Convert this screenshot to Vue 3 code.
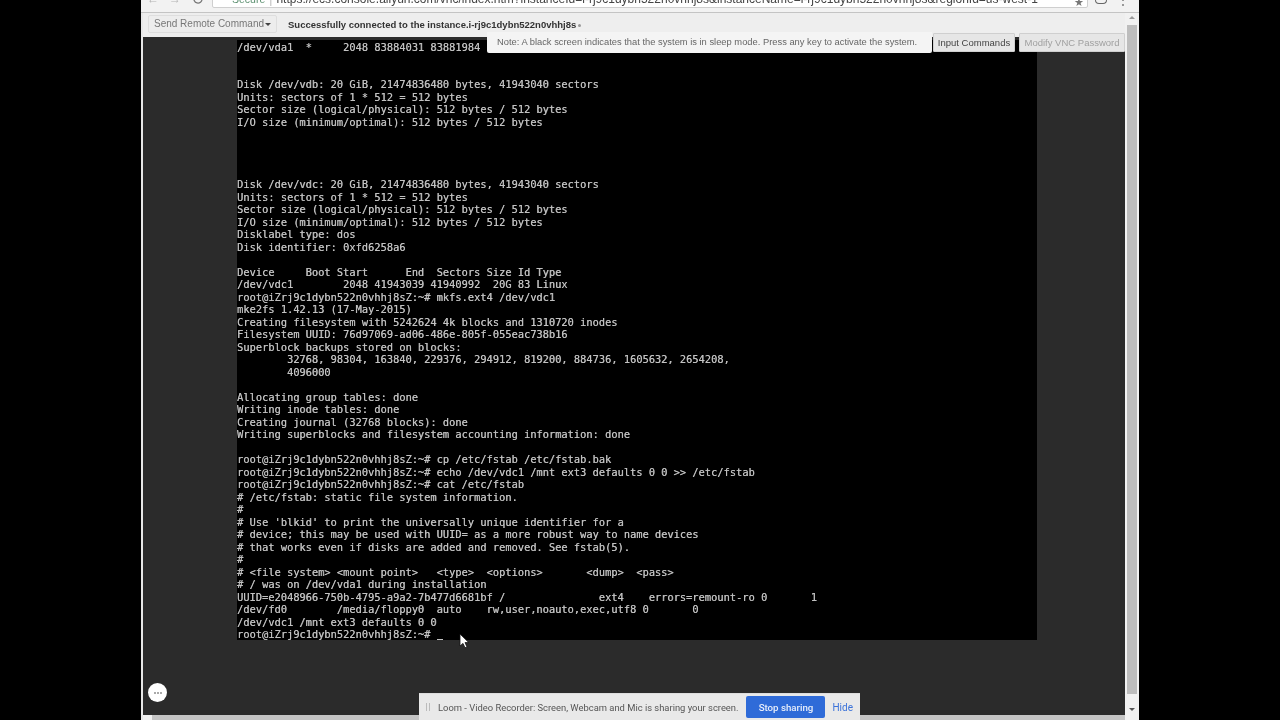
<script setup>
const prompt = 'root@iZrj9c1dybn522n0vhhj8sZ:~#'
const lines = [
  '/dev/vda1  *     2048 83884031 83881984  40G 83 Linux',
  '',
  '',
  'Disk /dev/vdb: 20 GiB, 21474836480 bytes, 41943040 sectors',
  'Units: sectors of 1 * 512 = 512 bytes',
  'Sector size (logical/physical): 512 bytes / 512 bytes',
  'I/O size (minimum/optimal): 512 bytes / 512 bytes',
  '',
  '',
  '',
  '',
  'Disk /dev/vdc: 20 GiB, 21474836480 bytes, 41943040 sectors',
  'Units: sectors of 1 * 512 = 512 bytes',
  'Sector size (logical/physical): 512 bytes / 512 bytes',
  'I/O size (minimum/optimal): 512 bytes / 512 bytes',
  'Disklabel type: dos',
  'Disk identifier: 0xfd6258a6',
  '',
  'Device     Boot Start      End  Sectors Size Id Type',
  '/dev/vdc1        2048 41943039 41940992  20G 83 Linux',
  prompt + ' mkfs.ext4 /dev/vdc1',
  'mke2fs 1.42.13 (17-May-2015)',
  'Creating filesystem with 5242624 4k blocks and 1310720 inodes',
  'Filesystem UUID: 76d97069-ad06-486e-805f-055eac738b16',
  'Superblock backups stored on blocks:',
  '        32768, 98304, 163840, 229376, 294912, 819200, 884736, 1605632, 2654208,',
  '        4096000',
  '',
  'Allocating group tables: done',
  'Writing inode tables: done',
  'Creating journal (32768 blocks): done',
  'Writing superblocks and filesystem accounting information: done',
  '',
  prompt + ' cp /etc/fstab /etc/fstab.bak',
  prompt + ' echo /dev/vdc1 /mnt ext3 defaults 0 0 >> /etc/fstab',
  prompt + ' cat /etc/fstab',
  '# /etc/fstab: static file system information.',
  '#',
  "# Use 'blkid' to print the universally unique identifier for a",
  '# device; this may be used with UUID= as a more robust way to name devices',
  '# that works even if disks are added and removed. See fstab(5).',
  '#',
  '# <file system> <mount point>   <type>  <options>       <dump>  <pass>',
  '# / was on /dev/vda1 during installation',
  'UUID=e2048966-750b-4795-a9a2-7b477d6681bf /               ext4    errors=remount-ro 0       1',
  '/dev/fd0        /media/floppy0  auto    rw,user,noauto,exec,utf8 0       0',
  '/dev/vdc1 /mnt ext3 defaults 0 0',
  prompt,
]
</script>

<template>
  <div class="screen">
    <div class="browser">
      <header class="chrome">
        <div class="nav">
          <span class="nav-glyph">←</span>
          <span class="nav-glyph">→</span>
          <svg class="reload" viewBox="0 0 12 12" width="12" height="12"><path d="M10 6a4 4 0 1 1-1.2-2.8M10 1v2.6H7.4" fill="none" stroke="#777" stroke-width="1.3"/></svg>
        </div>
        <div class="address">
          <span class="secure">Secure</span><span class="sep">|</span><span class="url">https://ecs.console.aliyun.com/vnc/index.htm?instanceId=i-rj9c1dybn522n0vhhj8s&amp;instanceName=i-rj9c1dybn522n0vhhj8s&amp;regionId=us-west-1</span>
        </div>
        <span class="star">★</span>
        <span class="avatar"></span>
        <span class="menu">⋮</span>
      </header>

      <div class="body">
        <main class="page">
          <div class="toolbar">
            <button class="send">Send Remote Command<i class="caret"></i></button>
            <strong class="status">Successfully connected to the instance.i-rj9c1dybn522n0vhhj8s</strong>
            <i class="dot"></i>
          </div>
          <div class="stage">
            <div class="terminal"><div v-for="(line, i) in lines" :key="i" class="line">{{ line }}<i v-if="i === lines.length - 1" class="cursor"></i></div></div>
            <div class="overlay">
              <div class="note">Note: A black screen indicates that the system is in sleep mode. Press any key to activate the system.</div>
              <button class="tool">Input Commands</button>
              <button class="tool muted">Modify VNC Password</button>
            </div>
            <svg class="pointer" viewBox="0 0 10 16" width="10" height="16"><path d="M1 1v12l3-2.6 2 4.4 2-.9-2-4.3h3.8z" fill="#fff" stroke="#111" stroke-width=".8"/></svg>
            <div class="bubble"><i></i><i></i><i></i></div>
          </div>
          <div class="hbar"><span class="hthumb"></span></div>
        </main>
        <aside class="scrollbar">
          <span class="arrow up"></span>
          <span class="thumb"></span>
          <span class="arrow down"></span>
        </aside>
      </div>

      <div class="loom">
        <span class="grip"></span>
        <span class="loom-text">Loom - Video Recorder: Screen, Webcam and Mic is sharing your screen.</span>
        <button class="stop">Stop sharing</button>
        <span class="hide">Hide</span>
      </div>
    </div>
  </div>
</template>

<style>
html, body { margin: 0; background: #000; overflow: hidden; }
</style>

<style scoped>
.screen {
  width: 1280px;
  height: 720px;
  background: #000;
  display: flex;
  justify-content: center;
  overflow: hidden;
  font-family: "Liberation Sans", Arial, sans-serif;
}
.browser {
  position: relative;
  width: 998px;
  height: 720px;
  display: flex;
  flex-direction: column;
  background: #f1f1f1;
  filter: blur(0.45px);
}
.chrome {
  height: 13px;
  flex: none;
  display: flex;
  align-items: flex-end;
  background: #f2f2f2;
  border-bottom: 1px solid #c4c4c4;
  box-sizing: border-box;
  overflow: hidden;
  position: relative;
}
.nav {
  width: 71px;
  flex: none;
  height: 20px;
  margin-bottom: 3px;
  display: flex;
  align-items: center;
  gap: 11px;
  padding-left: 6px;
  box-sizing: border-box;
  color: #b5b5b5;
  font-size: 12px;
}
.nav-glyph { width: 11px; }
.reload { margin-left: 1px; }
.address {
  flex: none;
  width: 876px;
  height: 20px;
  margin-bottom: 4px;
  background: #fff;
  border: 1px solid #cfcfcf;
  box-sizing: border-box;
  border-radius: 2px;
  font-size: 12px;
  line-height: 20px;
  white-space: nowrap;
  overflow: hidden;
  padding-left: 19px;
  color: #444;
}
.secure { color: #5b8f6f; font-size: 10.5px; }
.sep { margin: 0 4px; color: #bbb; }
.star { position: absolute; right: 55px; top: -3px; color: #777; font-size: 11px; line-height: 10px; }
.avatar { position: absolute; right: 32px; top: 0; width: 10px; height: 3px; border: 1px solid #666; border-top: 0; border-radius: 0 0 6px 6px; }
.menu { position: absolute; right: 10px; top: -3px; color: #666; font-size: 12px; line-height: 6px; }
.body { flex: 1; display: flex; min-height: 0; border-left: 2px solid #e8e8e8; }
.page { flex: 1; display: flex; flex-direction: column; min-width: 0; }
.toolbar {
  height: 24px;
  flex: none;
  background: #eee;
  display: flex;
  align-items: center;
  padding: 0 0 2px 5px;
  box-sizing: border-box;
}
.send {
  width: 129px;
  height: 18px;
  padding: 0;
  background: #ededed;
  border: 1px solid #dedede;
  border-radius: 2px;
  color: #777;
  font: 10px/16px "Liberation Sans", Arial, sans-serif;
  white-space: nowrap;
}
.caret {
  display: inline-block;
  margin-left: 1px;
  vertical-align: 1px;
  border: 3px solid transparent;
  border-top-color: #444;
  border-bottom-width: 0;
}
.status {
  margin-left: 11px;
  font-size: 9.5px;
  color: #333;
}
.dot { margin-left: 2px; width: 3px; height: 3px; background: #999; border-radius: 50%; margin-top: 2px; }
.stage {
  flex: 1;
  min-height: 0;
  position: relative;
  background: #2b2b2b;
}
.terminal {
  width: 800px;
  height: 600px;
  margin: 3px 0 0 94px;
  padding-top: 0.6px;
  box-sizing: border-box;
  background: #000;
  color: #c2c2c2;
  font-family: "DejaVu Sans Mono", "Liberation Mono", monospace;
  font-size: 10.36px;
  text-shadow: 0.3px 0 0 #9a9a9a;
  filter: blur(0.2px);
  overflow: hidden;
}
.line { height: 12.5px; line-height: 12.5px; white-space: pre; }
.cursor {
  display: inline-block;
  width: 6px;
  height: 1.5px;
  margin-left: 6.24px;
  vertical-align: -2.5px;
  background: #c2c2c2;
}
.overlay {
  position: absolute;
  top: -5px;
  left: 344px;
  display: flex;
  align-items: center;
}
.note {
  width: 445px;
  height: 21px;
  box-sizing: border-box;
  padding-left: 10px;
  background: #f4f4f4;
  border-radius: 0 0 2px 2px;
  font-size: 9.35px;
  line-height: 20px;
  color: #666;
  white-space: nowrap;
}
.tool {
  width: 82px;
  height: 19px;
  margin-left: 1px;
  padding: 0;
  background: #e6e6e6;
  border: 1px solid #cfcfcf;
  border-radius: 1px;
  font: 9.5px/16px "Liberation Sans", Arial, sans-serif;
  color: #444;
  white-space: nowrap;
}
.tool.muted { margin-left: 4px; color: #a0a0a0; width: 106px; }
.pointer { position: absolute; left: 316px; top: 596px; }
.bubble {
  position: absolute;
  left: 5px;
  top: 646px;
  width: 19px;
  height: 19px;
  border-radius: 50%;
  background: #fff;
  display: flex;
  align-items: center;
  justify-content: center;
  gap: 1px;
}
.bubble i { width: 2px; height: 2px; background: #aaa; }
.hbar {
  height: 5px;
  flex: none;
  background: #f1f1f1;
  padding-left: 9px;
}
.hthumb { display: block; height: 5px; background: #c4c4c4; }
.scrollbar {
  width: 14px;
  flex: none;
  display: flex;
  flex-direction: column;
  background: #f1f1f1;
}
.arrow { height: 12px; flex: none; position: relative; }
.arrow::after {
  content: "";
  position: absolute;
  left: 4px;
  border: 3px solid transparent;
}
.arrow.up::after { top: 3px; border-bottom-color: #999; border-top-width: 0; }
.arrow.down { margin-top: auto; margin-bottom: 3px; height: 14px; }
.arrow.down::after { top: 5px; border-top-color: #555; border-bottom-width: 0; }
.thumb { height: 669px; flex: none; background: #bdbdbd; margin: 0 2px; }
.loom {
  position: absolute;
  left: 278px;
  top: 693px;
  width: 441px;
  height: 27px;
  display: flex;
  align-items: center;
  background: #e9e9e9;
  box-sizing: border-box;
  border-top: 1px solid #ddd;
  font-family: Roboto, "Liberation Sans", sans-serif;
  font-size: 9.4px;
  color: #555;
}
.grip { width: 4px; height: 8px; margin-left: 7px; border-left: 1px solid #bbb; border-right: 1px solid #bbb; flex: none; box-sizing: border-box; }
.loom-text { margin-left: 8px; white-space: nowrap; }
.stop {
  flex: none;
  margin-left: auto;
  width: 79px;
  height: 22px;
  padding: 0;
  border: 0;
  border-radius: 2px;
  background: #2f6bd8;
  color: #e8eefb;
  font: 500 9.7px Roboto, "Liberation Sans", sans-serif;
  white-space: nowrap;
}
.hide { margin: 0 7px; color: #3b72d9; font-size: 10px; }
</style>
